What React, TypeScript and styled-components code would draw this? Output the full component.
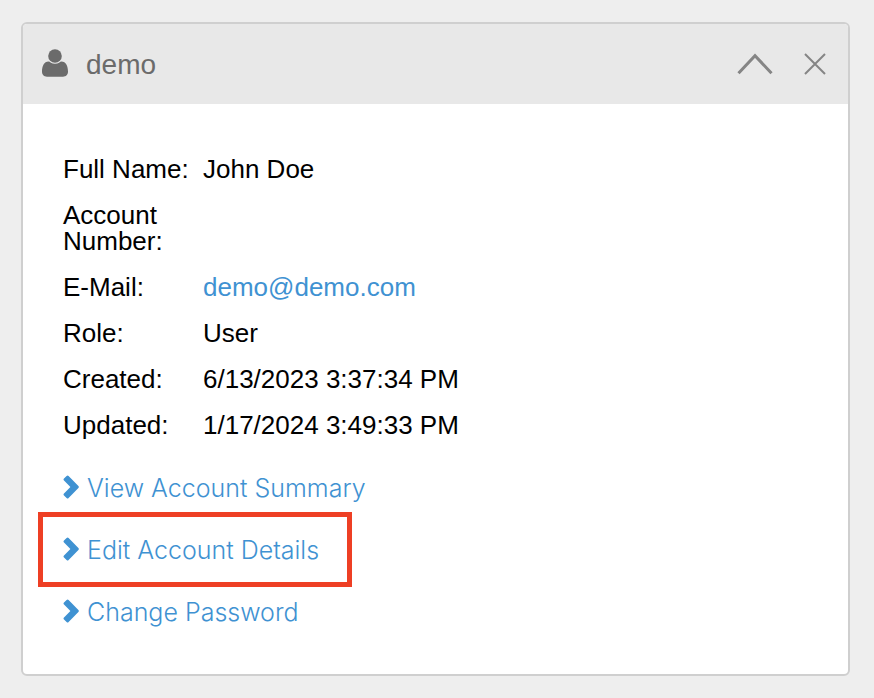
import React from "react";
import styled, { createGlobalStyle } from "styled-components";

const GlobalStyle = createGlobalStyle`
  *, *::before, *::after { box-sizing: border-box; }
  body {
    margin: 0;
    background: #eeeeee;
    color: #000;
    font-family: "Liberation Sans", Helvetica, Arial, sans-serif;
    font-size: 26px;
    line-height: 26px;
  }
`;

const Page = styled.main`
  padding: 22px 24px 24px 21px;
`;

const Panel = styled.section`
  border: 2px solid #cfcfcf;
  border-radius: 6px;
  background: #fff;
  overflow: hidden;
`;

const PanelHeader = styled.header`
  display: flex;
  align-items: center;
  min-height: 80px;
  padding: 0 21px 0 19px;
  background: #e8e8e8;
  color: #6b6b6b;
`;

const Title = styled.h1`
  flex: 1;
  margin: 0 0 0 18px;
  padding-top: 2px;
  font-size: 28px;
  line-height: 32px;
  font-weight: 400;
`;

const UserGlyph = styled.svg`
  width: 26px;
  height: 28px;
  margin-bottom: 2px;
  fill: currentColor;
`;

const IconButton = styled.button`
  display: flex;
  padding: 0;
  margin-left: 30px;
  border: 0;
  background: none;
  color: #858585;
  cursor: pointer;
`;

const LineIcon = styled.svg<{ $weight: number }>`
  fill: none;
  stroke: currentColor;
  stroke-width: ${(p) => p.$weight};
`;

const PanelBody = styled.div`
  padding: 42px 40px 31px;
`;

const Details = styled.table`
  border-collapse: collapse;
`;

const Label = styled.th`
  width: 140px;
  padding: 10px 14px 10px 0;
  font-weight: 400;
  text-align: left;
  vertical-align: top;
`;

const Value = styled.td`
  padding: 10px 0;
  vertical-align: top;
`;

const Link = styled.a`
  color: #3f92d2;
  text-decoration: none;
  &:hover { text-decoration: underline; }
`;

const Actions = styled.ul`
  margin: 9px 0 0;
  padding: 0;
  list-style: none;
`;

const Action = styled.li<{ $marked?: boolean }>`
  position: relative;
  display: flex;
  align-items: center;
  width: fit-content;
  height: 62px;
  ${(p) =>
    p.$marked &&
    `&::after {
      content: "";
      position: absolute;
      inset: -7px -33px -6px -25px;
      border: 5px solid #ee3f24;
      pointer-events: none;
    }`}
`;

const ActionLink = styled(Link)`
  display: flex;
  align-items: center;
  gap: 8px;
  font-family: Inter, "Liberation Sans", sans-serif;
  font-size: 25px;
  font-weight: 300;
`;

const Chevron = styled.svg`
  width: 16px;
  height: 24px;
  margin-bottom: 2px;
  fill: currentColor;
`;

const fields: { label: string; value: React.ReactNode }[] = [
  { label: "Full Name:", value: "John Doe" },
  { label: "Account Number:", value: "" },
  { label: "E-Mail:", value: <Link href="mailto:demo@demo.com">demo@demo.com</Link> },
  { label: "Role:", value: "User" },
  { label: "Created:", value: "6/13/2023 3:37:34 PM" },
  { label: "Updated:", value: "1/17/2024 3:49:33 PM" },
];

const actions = [
  { text: "View Account Summary", href: "#summary" },
  { text: "Edit Account Details", href: "#edit", marked: true },
  { text: "Change Password", href: "#password" },
];

export default function App() {
  return (
    <>
      <GlobalStyle />
      <Page>
        <Panel>
          <PanelHeader>
            <UserGlyph viewBox="0 0 26 28" aria-hidden="true">
              <circle cx="13" cy="7" r="6.800" />
              <path d="M6.600 12.500C2 12.500 0 17 0 22.600c0 3.300 2 5.200 5 5.200h16c3 0 5-1.900 5-5.200 0-5.600-2-10.100-6.600-10.100-1.300 0-2.800 2.300-6.400 2.300s-5.100-2.300-6.400-2.300z" />
            </UserGlyph>
            <Title>demo</Title>
            <IconButton type="button" aria-label="Collapse">
              <LineIcon $weight={3} width="36" height="24" viewBox="0 0 36 24" aria-hidden="true">
                <path d="M1.500 21.300 18 3.700 34.500 21.300" />
              </LineIcon>
            </IconButton>
            <IconButton type="button" aria-label="Close">
              <LineIcon $weight={2} width="24" height="24" viewBox="0 0 24 24" aria-hidden="true">
                <path d="M2 2 22 22M22 2 2 22" />
              </LineIcon>
            </IconButton>
          </PanelHeader>
          <PanelBody>
            <Details>
              <tbody>
                {fields.map((f) => (
                  <tr key={f.label}>
                    <Label scope="row">{f.label}</Label>
                    <Value>{f.value}</Value>
                  </tr>
                ))}
              </tbody>
            </Details>
            <Actions>
              {actions.map((a) => (
                <Action key={a.text} $marked={a.marked}>
                  <ActionLink href={a.href}>
                    <Chevron viewBox="0 0 16 24" aria-hidden="true">
                      <path d="M1 3.600 3.600 1Q4.600 0 5.600 1L15.400 11Q16.300 12 15.400 13L5.600 23Q4.600 24 3.600 23L1 20.400Q0 19.400 1 18.400L7.400 12 1 5.600Q0 4.600 1 3.600z" />
                    </Chevron>
                    {a.text}
                  </ActionLink>
                </Action>
              ))}
            </Actions>
          </PanelBody>
        </Panel>
      </Page>
    </>
  );
}
